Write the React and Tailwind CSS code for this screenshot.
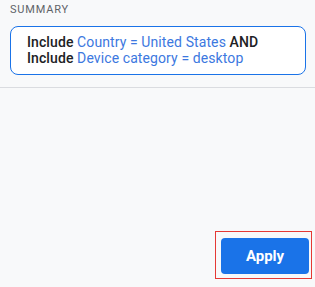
export default function App() {
  return (
    <div className="w-[315px] h-[287px] bg-[#f8f9fa] flex flex-col font-['Roboto',sans-serif] overflow-hidden">
      <div className="px-[10px] pt-[3px] pb-[12px] border-b border-[#dadce0]">
        <div className="text-[11px] leading-[13px] tracking-[0.8px] text-[#5f6368] uppercase">Summary</div>
        <div className="mt-[10px] w-[296px] border border-[#1a73e8] rounded-[8px] bg-white pl-[16px] pt-[7px] pb-[8px] text-[14px] leading-[16px] tracking-[0.1px]">
          <div>
            <span className="font-medium text-[#202124]">Include</span>{' '}
            <span className="text-[#3c78e0]">Country = United States</span>{' '}
            <span className="font-medium text-[#202124]">AND</span>
          </div>
          <div>
            <span className="font-medium text-[#202124]">Include</span>{' '}
            <span className="text-[#3c78e0]">Device category = desktop</span>
          </div>
        </div>
      </div>
      <div className="flex-1 flex items-end justify-end pr-[3px] pb-[8px]">
        <div className="border border-[#e53935] pl-[5px] pr-[2px] pt-[6px] pb-[4px]">
          <button className="w-[88px] h-[36px] rounded-[4px] bg-[#1a73e8] text-white text-[15px] font-bold">Apply</button>
        </div>
      </div>
    </div>
  );
}
